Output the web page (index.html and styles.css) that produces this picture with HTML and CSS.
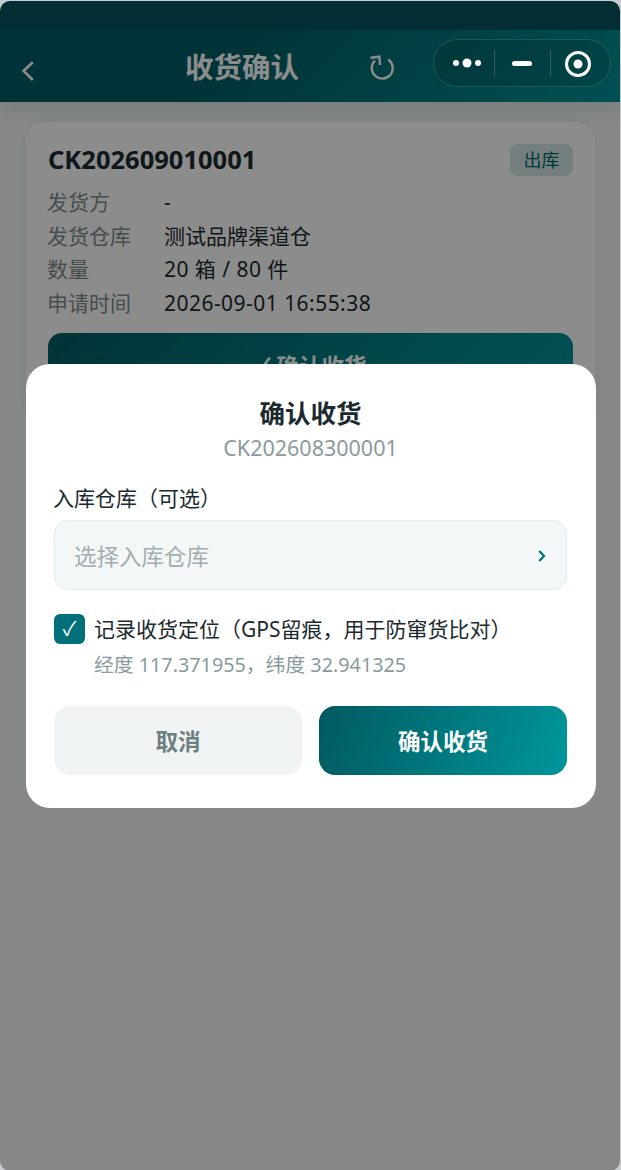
FILE: index.html
```html
<!DOCTYPE html>
<html lang="zh-CN">
<head>
    <meta charset="UTF-8">
    <meta name="viewport" content="width=device-width, initial-scale=1.0">
    <title>收货确认</title>
    <link rel="stylesheet" href="styles.css">
</head>
<body>
    <div class="window">
        <div class="status-bar"></div>
        <header class="nav">
            <svg class="nav-back" width="12" height="20" viewBox="0 0 12 20"><path d="M10.8 1.2 1.6 9.8 10.8 19" fill="none" stroke="#fff" stroke-width="2.6"/></svg>
            <h1 class="nav-title">收货确认</h1>
            <svg class="nav-refresh" width="28" height="28" viewBox="0 0 28 28"><path d="M20.3 5.5A10.5 10.5 0 1 1 7 6.5M2.5 3.7 11.3 2.7 12 11" fill="none" stroke="#fff" stroke-width="2.4"/></svg>
        </header>

        <main class="list">
            <section class="card">
                <div class="card-head">
                    <div class="card-no">CK202609010001</div>
                    <span class="tag">出库</span>
                </div>
                <div class="row"><span class="row-label">发货方</span><span>-</span></div>
                <div class="row"><span class="row-label">发货仓库</span><span>测试品牌渠道仓</span></div>
                <div class="row"><span class="row-label">数量</span><span class="row-num">20 箱 / 80 件</span></div>
                <div class="row"><span class="row-label">申请时间</span><span class="row-num">2026-09-01 16:55:38</span></div>
                <button class="card-btn">✓ 确认收货</button>
            </section>
        </main>

        <div class="mask">
            <div class="modal">
                <h2 class="modal-title">确认收货</h2>
                <div class="modal-no">CK202608300001</div>
                <div class="field-label">入库仓库（可选）</div>
                <div class="select">
                    <span>选择入库仓库</span>
                    <svg class="select-arrow" width="8" height="12" viewBox="0 0 8 12"><path d="M1.2 1 6 6 1.2 11" fill="none" stroke="#00717a" stroke-width="2.2"/></svg>
                </div>
                <div class="check-row">
                    <span class="checkbox">✓</span>
                    <span class="check-text">记录收货定位（GPS留痕，用于防窜货比对）</span>
                </div>
                <div class="coords">经度 117.371955，纬度 32.941325</div>
                <div class="actions">
                    <button class="btn btn-cancel">取消</button>
                    <button class="btn btn-ok">确认收货</button>
                </div>
            </div>
        </div>

        <!-- capsule stays above the mask -->
        <div class="capsule">
            <svg class="cap-dots" width="28" height="12" viewBox="0 0 28 12"><circle cx="3" cy="6" r="3" fill="#fff"/><circle cx="14" cy="6" r="4.5" fill="#fff"/><circle cx="25" cy="6" r="3" fill="#fff"/></svg>
            <span class="cap-line"></span>
            <span class="cap-minus"></span>
            <span class="cap-line"></span>
            <svg class="cap-circle" width="26" height="26" viewBox="0 0 26 26"><circle cx="13" cy="13" r="11.5" fill="none" stroke="#fff" stroke-width="3"/><circle cx="13" cy="13" r="4.5" fill="#fff"/></svg>
        </div>
    </div>
</body>
</html>
```

FILE: styles.css
```css
* {
    box-sizing: border-box;
}

body {
    margin: 0;
    background-color: #c9cccc;
    font-family: "Noto Sans", "Noto Sans CJK SC", sans-serif;
    color: #1a2a2e;
}

button {
    font-family: inherit;
    border: none;
}

.window {
    position: relative;
    width: 620px;
    height: 1170px;
    margin-top: 1px;
    overflow: hidden;
    border-radius: 10px;
    background-color: #f4f7f8;
}

.status-bar {
    height: 29px;
    background-color: #00555c;
}

.nav {
    display: flex;
    align-items: center;
    height: 72px;
    padding-left: 22px;
    background: linear-gradient(135deg, #005e64 35%, #009298 100%);
    box-shadow: 0 4px 24px rgba(0, 90, 96, 0.15);
    color: #fff;
}

.nav-back {
    margin: 10px 151px 0 0;
}

.nav-title {
    width: 183px;
    margin: 0 0 2px;
    font-size: 28.5px;
    font-weight: 700;
}

.nav-refresh {
    margin-top: 4px;
}

.list {
    padding: 20px 25px 0 26px;
}

.card {
    padding: 22px 23px 24px 22px;
    border-radius: 20px;
    background-color: #fff;
    box-shadow: 0 2px 12px rgba(0, 60, 70, 0.06);
}

.card-head {
    display: flex;
    justify-content: space-between;
    align-items: center;
    margin-bottom: 10px;
}

.card-no {
    margin-bottom: 2px;
    font-size: 25.5px;
    font-weight: 700;
    line-height: 30px;
}

.tag {
    width: 63px;
    height: 32px;
    margin-right: -1px;
    border-radius: 8px;
    background-color: #d5e7e8;
    color: #00666c;
    font-size: 18px;
    line-height: 32px;
    text-align: center;
}

.row {
    display: flex;
    height: 33.5px;
    font-size: 21px;
    line-height: 33.5px;
}

.row-label {
    width: 116px;
    margin-left: -1px;
    margin-right: 1px;
    color: #7f8c8d;
}

.row-num {
    letter-spacing: 0.46px;
}

.card-btn {
    display: block;
    width: calc(100% + 1px);
    height: 64px;
    margin-top: 13px;
    border-radius: 14px;
    background: linear-gradient(135deg, #005e64, #00979d);
    color: #fff;
    font-size: 22.5px;
    font-weight: 700;
}

.mask {
    position: absolute;
    inset: 0;
    display: flex;
    align-items: center;
    padding: 0 24px 0 26px;
    background-color: rgba(0, 0, 0, 0.45);
}

.modal {
    width: 570px;
    height: 444px;
    padding: 31px 29px 0 28px;
    border-radius: 24px;
    background-color: #fff;
}

.modal-title {
    margin: 0;
    font-size: 25.5px;
    font-weight: 700;
    line-height: 36px;
    text-align: center;
}

.modal-no {
    margin-top: 2px;
    color: #8a9a9e;
    font-size: 21.5px;
    line-height: 30px;
    text-align: center;
}

.field-label {
    margin: 20px 0 0 -1px;
    font-size: 21px;
    line-height: 30px;
}

.select {
    display: flex;
    justify-content: space-between;
    align-items: center;
    height: 70px;
    margin-top: 7px;
    padding: 0 20px 0 19px;
    border: 1px solid #e3ecee;
    border-radius: 14px;
    background-color: #f4f7f8;
    color: #a3adaf;
    font-size: 22.5px;
}

.select-arrow {
    margin-top: 2px;
}

.check-row {
    display: flex;
    align-items: center;
    gap: 9px;
    margin-top: 24px;
}

.checkbox {
    width: 31px;
    height: 30px;
    border-radius: 6px;
    background-color: #00717a;
    color: #fff;
    font-size: 20px;
    line-height: 30px;
    text-align: center;
}

.check-text {
    font-size: 21px;
    line-height: 30px;
}

.coords {
    margin: 6px 0 0 40px;
    color: #8a9a9e;
    font-size: 19.8px;
    line-height: 30px;
}

.actions {
    display: flex;
    gap: 17px;
    margin-top: 26px;
}

.btn {
    flex: 1;
    height: 69px;
    border-radius: 16px;
    font-size: 22.5px;
    font-weight: 700;
}

.btn-cancel {
    background-color: #f0f4f5;
    color: #6e7f82;
}

.btn-ok {
    background: linear-gradient(110deg, #005a60, #00969c);
    color: #fff;
}

.capsule {
    position: absolute;
    top: 38px;
    left: 433px;
    display: flex;
    align-items: center;
    width: 178px;
    height: 48px;
    padding-left: 19px;
    border: 1px solid rgba(255, 255, 255, 0.12);
    border-radius: 24px;
    background-color: rgba(0, 0, 0, 0.12);
}

.cap-dots {
    margin-right: 13px;
}

.cap-line {
    width: 1px;
    height: 26px;
    background-color: rgba(255, 255, 255, 0.2);
}

.cap-minus {
    width: 20px;
    height: 5px;
    margin: 1px 18px 0 17px;
    border-radius: 2.5px;
    background-color: #fff;
}

.cap-circle {
    margin: 1px 0 0 14px;
}
```
